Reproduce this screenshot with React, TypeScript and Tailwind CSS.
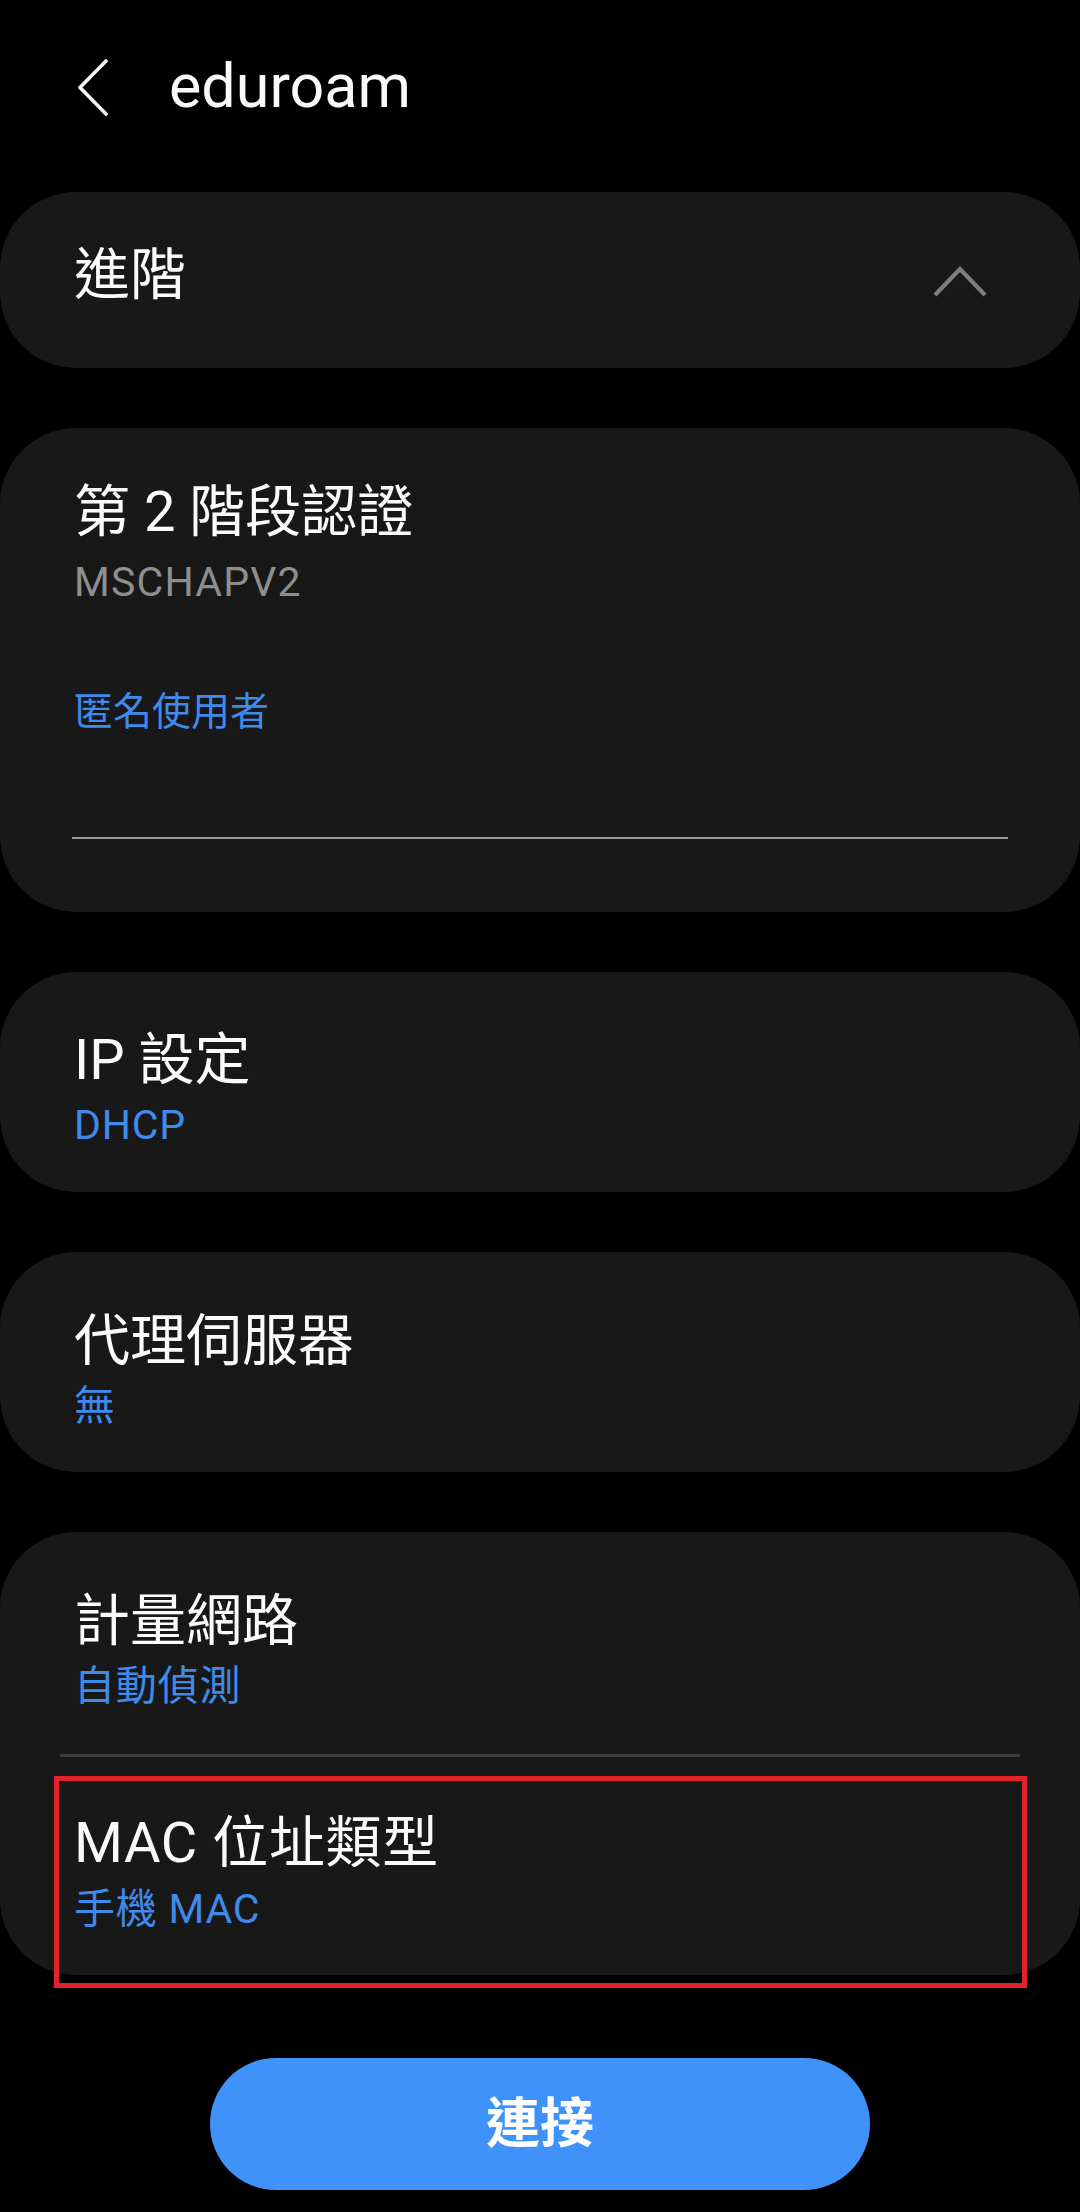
const font = { fontFamily: 'Roboto, "Noto Sans CJK TC", sans-serif' };

function Title({ children }: { children: React.ReactNode }) {
    return <div className="text-[56px] leading-[66px] text-[#fafafa]">{children}</div>;
}

function Sub({ children, gray }: { children: React.ReactNode; gray?: boolean }) {
    return (
        <div
            className={
                gray
                    ? "mt-[12px] text-[41px] leading-[50px] tracking-[1.2px] text-[#8e8e8e]"
                    : "mt-[7px] text-[41px] leading-[50px] tracking-[0.8px] text-[#3f8aea]"
            }
        >
            {children}
        </div>
    );
}

function Card({ children, className }: { children: React.ReactNode; className?: string }) {
    return <div className={"rounded-[76px] bg-[#181818] " + (className ?? "")}>{children}</div>;
}

export default function App() {
    return (
        <div className="min-h-[2212px] w-[1080px] bg-black" style={font}>
            {/* header */}
            <div className="flex h-[176px] items-center">
                <svg className="ml-[76px]" width="34" height="58" viewBox="0 0 34 58" fill="none">
                    <path d="M30 2 L4 28.5 L30 55" stroke="#f5f5f5" strokeWidth="3.6" strokeLinecap="round" strokeLinejoin="round" />
                </svg>
                <div className="ml-[59px] pb-[2px] text-[61px] text-[#fafafa]">eduroam</div>
            </div>

            <div className="mt-[16px] flex flex-col gap-[60px]">
                {/* 進階 */}
                <Card className="flex h-[176px] items-center justify-between pl-[74px] pr-[92px]">
                    <div className="pb-[10px] text-[56px] leading-[66px] text-[#fafafa]">進階</div>
                    <svg width="56" height="36" viewBox="0 0 56 36" fill="none">
                        <path d="M3 33 L28 7 L53 33" stroke="#7d7d7d" strokeWidth="4.2" />
                    </svg>
                </Card>

                {/* 第 2 階段認證 */}
                <Card className="px-[72px] pt-[51px] pb-[73px]">
                    <div className="px-[2px]">
                        <Title>第 2 階段認證</Title>
                        <Sub gray>MSCHAPV2</Sub>
                        <div className="mt-[80px] text-[39px] leading-[50px] text-[#3f8aea]">匿名使用者</div>
                    </div>
                    <div className="mt-[100px] h-[2px] bg-[#9a9a9a]" />
                </Card>

                <Card className="px-[74px] pt-[55px] pb-[42px]">
                    <Title>IP 設定</Title>
                    <Sub>DHCP</Sub>
                </Card>

                <Card className="px-[74px] pt-[56px] pb-[41px]">
                    <Title>代理伺服器</Title>
                    <Sub>無</Sub>
                </Card>

                {/* 計量網路 + MAC */}
                <Card className="pt-[56px]">
                    <div className="px-[74px]">
                        <Title>計量網路</Title>
                        <Sub>自動偵測</Sub>
                    </div>
                    <div className="mx-[60px] mt-[43px] h-[3px] bg-[#3c3c3c]" />
                    <div className="relative px-[74px] pt-[53px] pb-[41px]">
                        <div className="text-[56px] leading-[66px] tracking-[0.6px] text-[#fafafa]">MAC 位址類型</div>
                        <div className="mt-[8px] text-[41px] leading-[50px] tracking-[0.8px] text-[#3f8aea]">手機 MAC</div>
                        <div className="absolute top-[19px] right-[53px] bottom-[-13px] left-[54px] border-[5px] border-[#e3222b]" />
                    </div>
                </Card>
            </div>

            <div className="mt-[83px] flex justify-center">
                <button className="h-[132px] w-[660px] rounded-full bg-[#4092fb] text-[54px] font-bold text-white">
                    連接
                </button>
            </div>
        </div>
    );
}
